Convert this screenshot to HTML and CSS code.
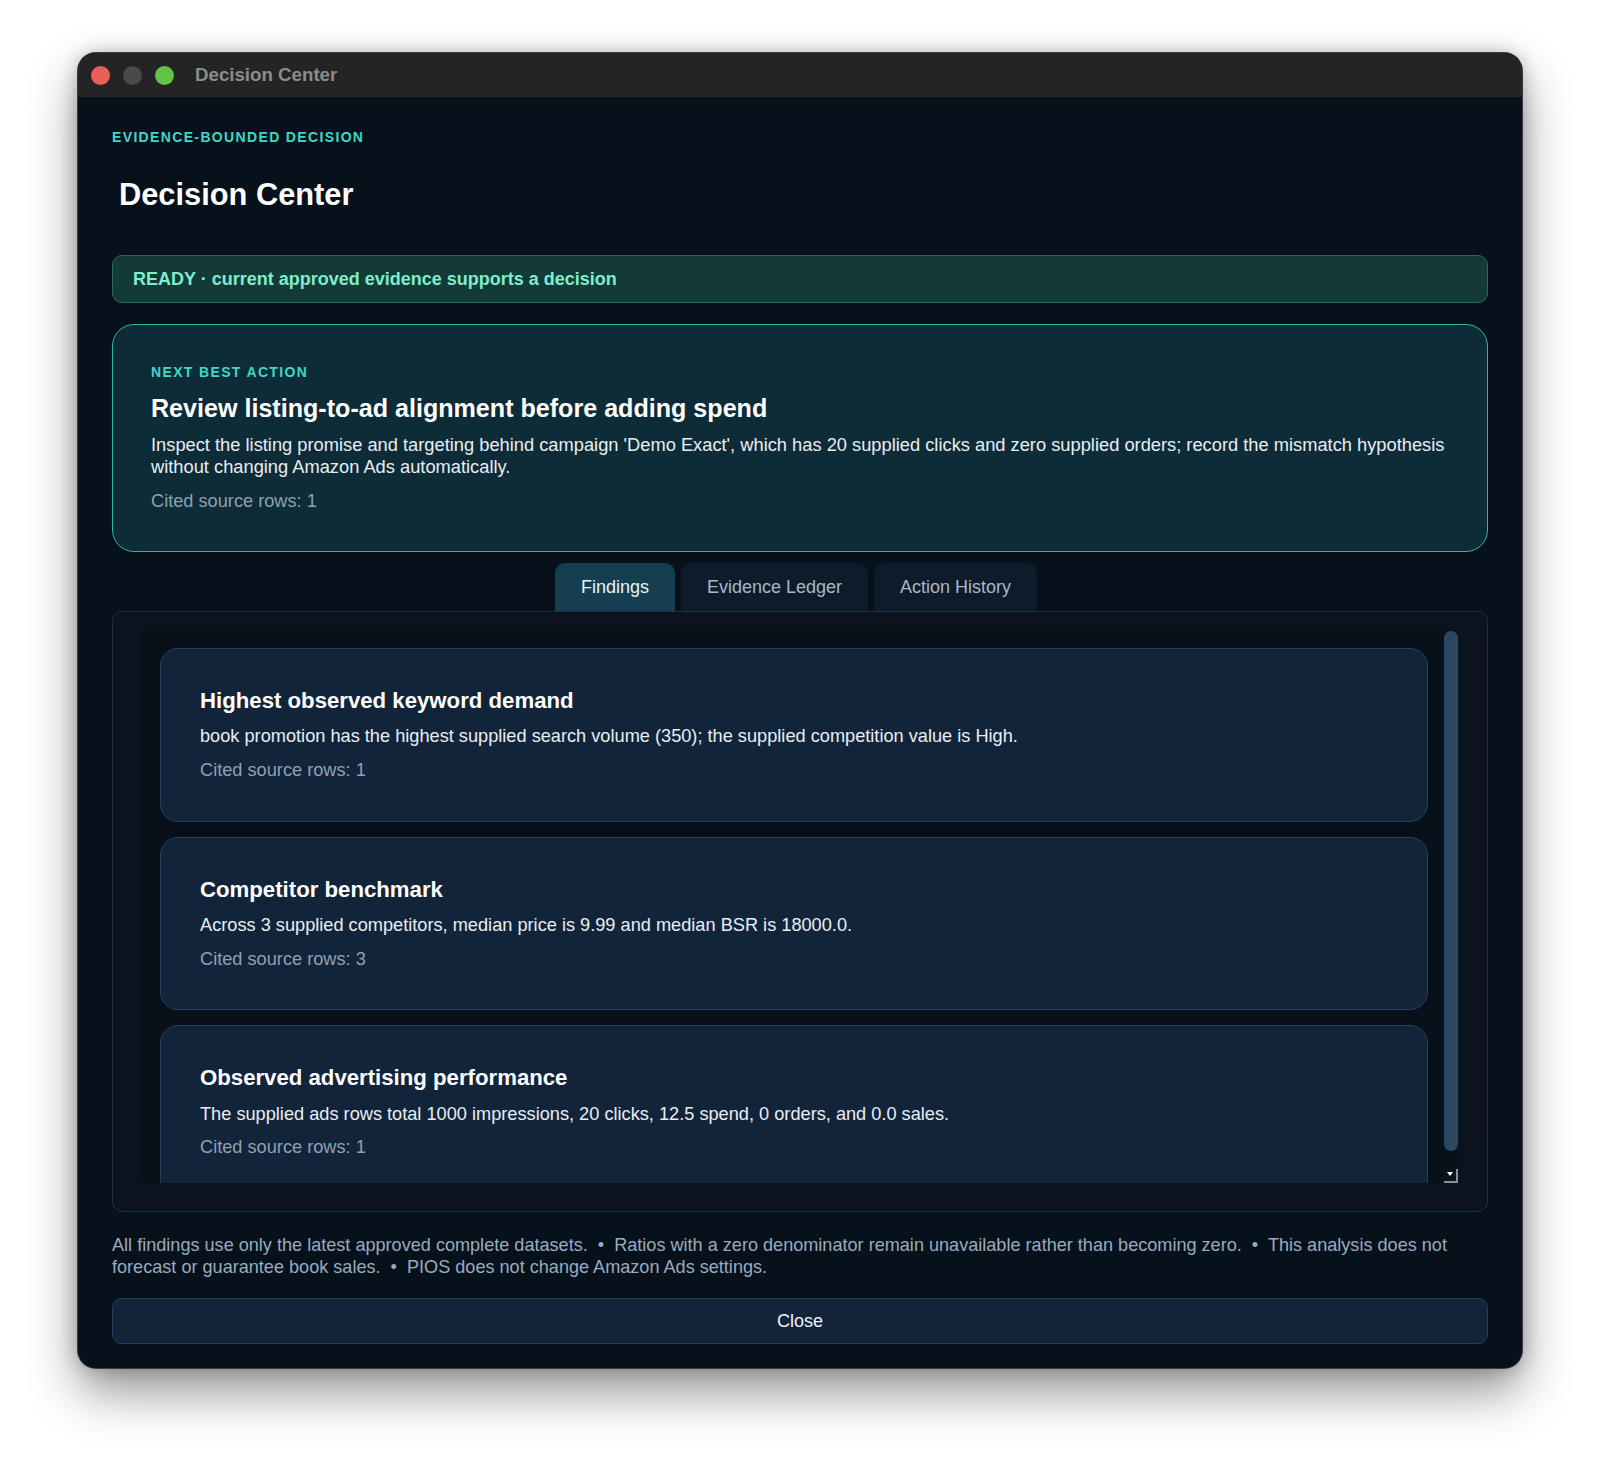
FILE: index.html
```html
<!DOCTYPE html>
<html lang="en">
<head>
<meta charset="utf-8">
<title>Decision Center</title>
<link rel="stylesheet" href="styles.css">
</head>
<body>
<div class="window">
  <div class="titlebar">
    <div class="lights">
      <span class="light red"></span>
      <span class="light gray"></span>
      <span class="light green"></span>
    </div>
    <div class="wtitle">Decision Center</div>
  </div>
  <div class="content">
    <div class="eyebrow">EVIDENCE-BOUNDED DECISION</div>
    <h1 class="heading">Decision Center</h1>
    <div class="banner">READY · current approved evidence supports a decision</div>
    <section class="action-card">
      <div class="eyebrow small">NEXT BEST ACTION</div>
      <h2 class="action-title">Review listing-to-ad alignment before adding spend</h2>
      <p class="action-desc">Inspect the listing promise and targeting behind campaign 'Demo Exact', which has 20 supplied clicks and zero supplied orders; record the mismatch hypothesis without changing Amazon Ads automatically.</p>
      <div class="cited">Cited source rows: 1</div>
    </section>
    <div class="tabs">
      <div class="tab active">Findings</div>
      <div class="tab">Evidence Ledger</div>
      <div class="tab">Action History</div>
    </div>
    <div class="panel">
      <div class="scroll">
        <div class="scroll-content">
          <article class="finding">
            <h3 class="finding-title">Highest observed keyword demand</h3>
            <p class="finding-text">book promotion has the highest supplied search volume (350); the supplied competition value is High.</p>
            <div class="cited">Cited source rows: 1</div>
          </article>
          <article class="finding">
            <h3 class="finding-title">Competitor benchmark</h3>
            <p class="finding-text">Across 3 supplied competitors, median price is 9.99 and median BSR is 18000.0.</p>
            <div class="cited">Cited source rows: 3</div>
          </article>
          <article class="finding">
            <h3 class="finding-title">Observed advertising performance</h3>
            <p class="finding-text">The supplied ads rows total 1000 impressions, 20 clicks, 12.5 spend, 0 orders, and 0.0 sales.</p>
            <div class="cited">Cited source rows: 1</div>
          </article>
        </div>
        <div class="scrollbar">
          <div class="thumb"></div>
          <div class="arrow"><span class="tri"></span></div>
        </div>
      </div>
    </div>
    <p class="footnote">All findings use only the latest approved complete datasets.&nbsp; •&nbsp; Ratios with a zero denominator remain unavailable rather than becoming zero.&nbsp; •&nbsp; This analysis does not forecast or guarantee book sales.&nbsp; •&nbsp; PIOS does not change Amazon Ads settings.</p>
    <button class="close-btn" type="button">Close</button>
  </div>
</div>
</body>
</html>
```

FILE: styles.css
```css
* { box-sizing: border-box; }

html, body {
  margin: 0;
  padding: 0;
  background: #ffffff;
  font-family: "Liberation Sans", Arial, Helvetica, sans-serif;
}

body {
  padding: 53px 0 0 78px;
  height: 1472px;
  overflow: hidden;
}

.window {
  width: 1444px;
  height: 1315px;
  border-radius: 18px;
  background: #07111c;
  overflow: hidden;
  box-shadow: 0 0 0 1px #3c3c3c, 0 24px 50px rgba(0, 0, 0, 0.42), 0 0 18px rgba(0, 0, 0, 0.25);
  display: flex;
  flex-direction: column;
}

.titlebar {
  height: 44px;
  flex: none;
  background: #242424;
  display: flex;
  align-items: center;
  padding-left: 13px;
}

.lights {
  display: flex;
  gap: 13px;
}

.light {
  width: 19px;
  height: 19px;
  border-radius: 50%;
  display: block;
}
.light.red { background: #ec5f57; }
.light.gray { background: #4a4a4a; }
.light.green { background: #5fc549; }

.wtitle {
  margin-left: 21px;
  color: #8c8c8c;
  font-weight: bold;
  font-size: 18.7px;
  line-height: 22px;
}

.content {
  flex: 1;
  padding: 31px 34px 0 34px;
  display: flex;
  flex-direction: column;
}

.eyebrow {
  color: #3fd8c8;
  font-weight: bold;
  font-size: 14px;
  line-height: 18px;
  letter-spacing: 1.35px;
}

.heading {
  margin: 31px 0 0 0;
  padding-left: 7px;
  font-size: 30.8px;
  line-height: 36px;
  font-weight: bold;
  color: #ffffff;
}

.banner {
  margin-top: 42px;
  height: 48px;
  border: 1px solid #2a6a5d;
  background: #133a37;
  border-radius: 10px;
  padding: 0 20px;
  display: flex;
  align-items: center;
  color: #7dedcc;
  font-weight: bold;
  font-size: 18px;
}

.action-card {
  margin-top: 21px;
  border: 1.5px solid #27b7a2;
  background: #0d2c37;
  border-radius: 22px;
  padding: 38px 20px 39px 38px;
}

.action-title {
  margin: 12px 0 0 0;
  font-size: 25.1px;
  line-height: 30px;
  font-weight: bold;
  color: #ffffff;
}

.action-desc {
  margin: 11px 0 0 0;
  font-size: 18.3px;
  line-height: 22px;
  color: #e8eef3;
}

.action-card .cited {
  margin-top: 12px;
  line-height: 22px;
}

.cited {
  font-size: 18.2px;
  line-height: 21.6px;
  color: #8fa1b3;
}

.tabs {
  margin-top: 11px;
  display: flex;
  justify-content: center;
  gap: 6px;
  padding-right: 8px;
}

.tab {
  height: 48px;
  padding: 0 26px;
  display: flex;
  align-items: center;
  border-radius: 10px 10px 0 0;
  background: #0e1b2a;
  color: #a6b8c8;
  font-size: 18px;
}

.tab.active {
  background: #133f50;
  color: #eaf2f7;
}

.panel {
  border: 1px solid #1b3045;
  border-radius: 10px;
  background: #0a131e;
  padding: 18px 29px 28px 28px;
}

.scroll {
  height: 553px;
  display: flex;
  background: #08101a;
}

.scroll-content {
  flex: 1;
  overflow: hidden;
  padding: 18px 16px 0 19px;
  display: flex;
  flex-direction: column;
  gap: 15px;
}

.finding {
  flex: none;
  border: 1px solid #25435e;
  background: #12243a;
  border-radius: 18px;
  padding: 39px 39px;
}

.finding-title {
  margin: 0;
  font-size: 22.2px;
  line-height: 26.4px;
  font-weight: bold;
  color: #ffffff;
}

.finding-text {
  margin: 12px 0 0 0;
  font-size: 18.2px;
  line-height: 21.6px;
  color: #e8eef3;
}

.finding .cited {
  margin-top: 12px;
}

.scrollbar {
  width: 14px;
  flex: none;
  display: flex;
  flex-direction: column;
  align-items: center;
}

.thumb {
  margin-top: 1px;
  width: 14px;
  height: 520px;
  border-radius: 7px;
  background: #2c4861;
}

.arrow {
  margin-top: 18px;
  width: 14px;
  height: 14px;
  border-right: 2px solid #8e8e8e;
  border-bottom: 2px solid #8e8e8e;
  background: #0a1420;
  display: flex;
  justify-content: center;
  padding-top: 3px;
}

.tri {
  width: 0;
  height: 0;
  border-left: 3px solid transparent;
  border-right: 3px solid transparent;
  border-top: 4px solid #ffffff;
}

.footnote {
  margin: 22px 0 0 0;
  font-size: 18.1px;
  line-height: 22px;
  color: #9aabbd;
}

.close-btn {
  margin-top: 20px;
  height: 46px;
  width: 100%;
  border: 1px solid #24425c;
  background: #12243a;
  border-radius: 10px;
  color: #eef3f8;
  font-family: "Liberation Sans", Arial, Helvetica, sans-serif;
  font-size: 18px;
  cursor: pointer;
}
```
